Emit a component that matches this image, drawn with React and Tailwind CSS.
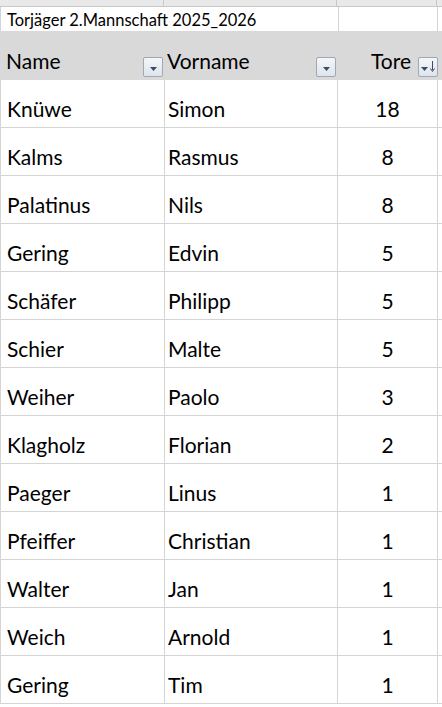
import React from 'react';

const rows = [
  ['Knüwe', 'Simon', 18],
  ['Kalms', 'Rasmus', 8],
  ['Palatinus', 'Nils', 8],
  ['Gering', 'Edvin', 5],
  ['Schäfer', 'Philipp', 5],
  ['Schier', 'Malte', 5],
  ['Weiher', 'Paolo', 3],
  ['Klagholz', 'Florian', 2],
  ['Paeger', 'Linus', 1],
  ['Pfeiffer', 'Christian', 1],
  ['Walter', 'Jan', 1],
  ['Weich', 'Arnold', 1],
  ['Gering', 'Tim', 1],
];

function FilterButton({ sorted }) {
  return (
    <div className="w-[20px] h-[20px] border border-[#a0a8b8] rounded-[2px] bg-gradient-to-b from-[#f4f6f9] to-[#dfe4ec] flex items-end justify-center pb-[5px] gap-[2px]">
      <svg width="7" height="4" viewBox="0 0 7 4">
        <path d="M0 0 L7 0 L3.5 4 Z" fill="#3a4a6a" />
      </svg>
      {sorted && (
        <svg width="5" height="11" viewBox="0 0 5 11" className="mb-[-1px]">
          <path d="M2.5 0 L2.5 9" stroke="#3a4a6a" strokeWidth="1" />
          <path d="M0.5 7.5 L2.5 10.5 L4.5 7.5" stroke="#3a4a6a" strokeWidth="1" fill="none" />
        </svg>
      )}
    </div>
  );
}

export default function App() {
  return (
    <div className="w-[442px] h-[707px] overflow-hidden bg-white text-black" style={{ fontFamily: 'Lato, "Open Sans", sans-serif' }}>
      {/* cut-off column header strip */}
      <div className="h-[7px] bg-[#e9e9e9] border-b border-[#c8c8c8] grid grid-cols-[164px_173px_100px_1fr] overflow-hidden">
        <div className="border-r border-[#c8c8c8]" />
        <div className="border-r border-[#c8c8c8]" />
        <div className="border-r border-[#c8c8c8]" />
        <div />
      </div>

      {/* title row */}
      <div className="h-[24px] grid grid-cols-[337px_100px_1fr] border-l border-[#d4d4d4]">
        <div className="pl-[6px] pt-[1px] text-[16.5px] leading-[24px] whitespace-nowrap">Torjäger 2.Mannschaft 2025_2026</div>
        <div className="border-l border-r border-[#d4d4d4]" />
        <div />
      </div>

      {/* header row */}
      <div className="h-[49px] bg-[#d9d9d9] grid grid-cols-[164px_173px_102px_1fr] text-[21px]">
        <div className="flex items-end justify-between pl-[6px] pr-[1px] pb-[3px]">
          <span className="pb-[1px]">Name</span>
          <FilterButton />
        </div>
        <div className="flex items-end justify-between pl-[3px] pr-[1px] pb-[3px]">
          <span className="pb-[1px]">Vorname</span>
          <FilterButton />
        </div>
        <div className="flex items-end justify-end gap-[7px] pr-[1px] pb-[3px]">
          <span className="pb-[1px]">Tore</span>
          <FilterButton sorted />
        </div>
        <div />
      </div>

      {/* data rows */}
      {rows.map(([name, first, goals], i) => (
        <div key={i} className="h-[48px] grid grid-cols-[164px_173px_100px_1fr] text-[21px] border-l border-[#d4d4d4]">
          <div className="border-r border-b border-[#d4d4d4] flex items-end pl-[6px] pb-[3px]">{name}</div>
          <div className="border-r border-b border-[#d4d4d4] flex items-end pl-[3px] pb-[3px]">{first}</div>
          <div className="border-r border-b border-[#d4d4d4] flex items-end justify-center pb-[3px]">{goals}</div>
          <div className="border-b border-[#d4d4d4]" />
        </div>
      ))}
    </div>
  );
}
